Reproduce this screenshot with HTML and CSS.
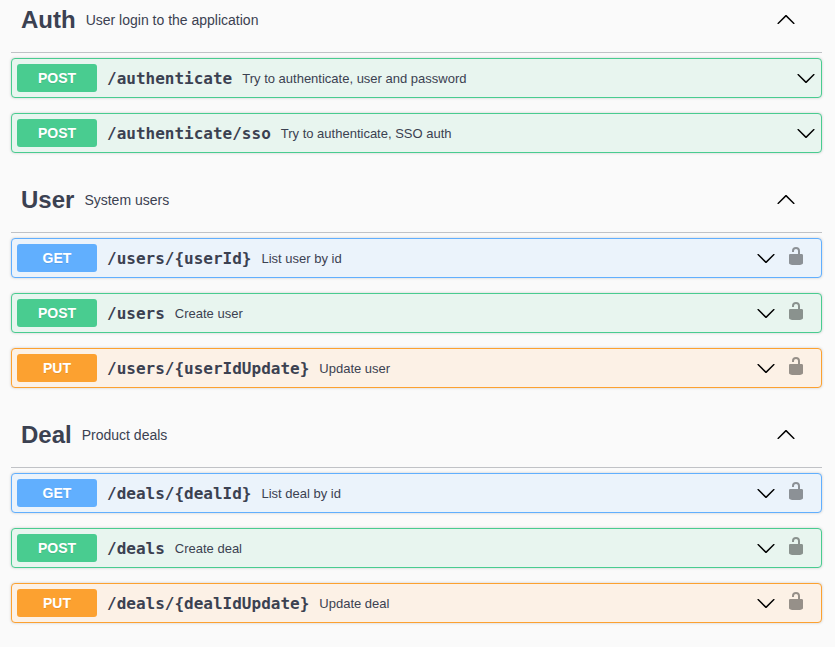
FILE: index.html
```html
<!DOCTYPE html>
<html lang="en"><head><meta charset="utf-8"><title>API</title><link rel="stylesheet" href="styles.css"></head>
<body>
<svg class="defs"><defs>
<symbol id="down" viewBox="0 0 20 20"><path d="M17.418 6.109c.272-.268.709-.268.979 0s.271.701 0 .969l-7.908 7.83c-.27.268-.707.268-.979 0l-7.908-7.83c-.27-.268-.27-.701 0-.969.271-.268.709-.268.979 0L10 13.25l7.418-7.141z"/></symbol>
<symbol id="lock" viewBox="0 0 20 20"><path d="M15.8 8H14V5C14 2.4 12.665 1 10 1 7.334 1 6 2.4 6 5V6h2v-.801C8 3.754 8.797 3 10 3c1.203 0 2 .754 2 2.199V8H4c-.553 0-1 .646-1 1.199V17c0 .549.428 1.139.951 1.307l1.197.387C5.672 18.861 6.55 19 7.1 19h5.8c.549 0 1.428-.139 1.951-.307l1.196-.387c.524-.167.953-.757.953-1.306V9.199C17 8.646 16.352 8 15.8 8z"/></symbol>
</defs></svg>
<main>
<section>
<h3><span>Auth</span><small>User login to the application</small><svg class="arrow up"><use href="#down"/></svg></h3>
<div class="op post"><b class="method">POST</b><span class="path">/authenticate</span><span class="desc">Try to authenticate, user and password</span><svg class="arrow"><use href="#down"/></svg></div>
<div class="op post"><b class="method">POST</b><span class="path">/authenticate/sso</span><span class="desc">Try to authenticate, SSO auth</span><svg class="arrow"><use href="#down"/></svg></div>
</section>
<section>
<h3><span>User</span><small>System users</small><svg class="arrow up"><use href="#down"/></svg></h3>
<div class="op get"><b class="method">GET</b><span class="path">/users/{userId}</span><span class="desc">List user by id</span><svg class="arrow"><use href="#down"/></svg><svg class="lock"><use href="#lock"/></svg></div>
<div class="op post"><b class="method">POST</b><span class="path">/users</span><span class="desc">Create user</span><svg class="arrow"><use href="#down"/></svg><svg class="lock"><use href="#lock"/></svg></div>
<div class="op put"><b class="method">PUT</b><span class="path">/users/{userIdUpdate}</span><span class="desc">Update user</span><svg class="arrow"><use href="#down"/></svg><svg class="lock"><use href="#lock"/></svg></div>
</section>
<section>
<h3><span>Deal</span><small>Product deals</small><svg class="arrow up"><use href="#down"/></svg></h3>
<div class="op get"><b class="method">GET</b><span class="path">/deals/{dealId}</span><span class="desc">List deal by id</span><svg class="arrow"><use href="#down"/></svg><svg class="lock"><use href="#lock"/></svg></div>
<div class="op post"><b class="method">POST</b><span class="path">/deals</span><span class="desc">Create deal</span><svg class="arrow"><use href="#down"/></svg><svg class="lock"><use href="#lock"/></svg></div>
<div class="op put"><b class="method">PUT</b><span class="path">/deals/{dealIdUpdate}</span><span class="desc">Update deal</span><svg class="arrow"><use href="#down"/></svg><svg class="lock"><use href="#lock"/></svg></div>
</section>
</main>
</body></html>
```
FILE: styles.css
```css
* { box-sizing: border-box; }
body { margin: 0; height: 647px; overflow: hidden; background: #fafafa; color: #3b4151; font-family: "Liberation Sans", Arial, sans-serif; }
.defs { display: none; }
main { margin: -13px 13px 0 11px; }
h3 { display: flex; align-items: center; height: 66px; margin: 0 0 5px; padding: 0 26px 0 10px; border-bottom: 1px solid rgba(59, 65, 81, .3); font-size: 24px; }
h3 small { flex: 1; padding: 0 10px; font-size: 14px; font-weight: 400; }
.arrow { width: 20px; height: 20px; flex: none; }
.up { transform: rotate(180deg); }
.op { display: flex; align-items: center; height: 40px; margin-bottom: 15px; padding: 5px; border: 1px solid; border-radius: 4px; box-shadow: 0 0 3px rgba(0, 0, 0, .19); }
.op:last-child { margin-bottom: 14px; }
.method { width: 80px; height: 28px; border-radius: 3px; color: #fff; font-size: 14px; line-height: 28px; text-align: center; text-shadow: 0 1px 0 rgba(0, 0, 0, .1); }
.path { padding: 0 10px; font: 600 16px "DejaVu Sans Mono", monospace; }
.desc { flex: 1; font-size: 13px; }
.lock { width: 20px; height: 20px; margin: -4px 10px 0 10px; flex: none; opacity: .4; }
.post { border-color: #49cc90; background: #e8f5ef; }
.post .method { background: #49cc90; }
.get { border-color: #61affe; background: #ebf3fb; }
.get .method { background: #61affe; }
.put { border-color: #fca130; background: #fcf1e6; }
.put .method { background: #fca130; }
```
